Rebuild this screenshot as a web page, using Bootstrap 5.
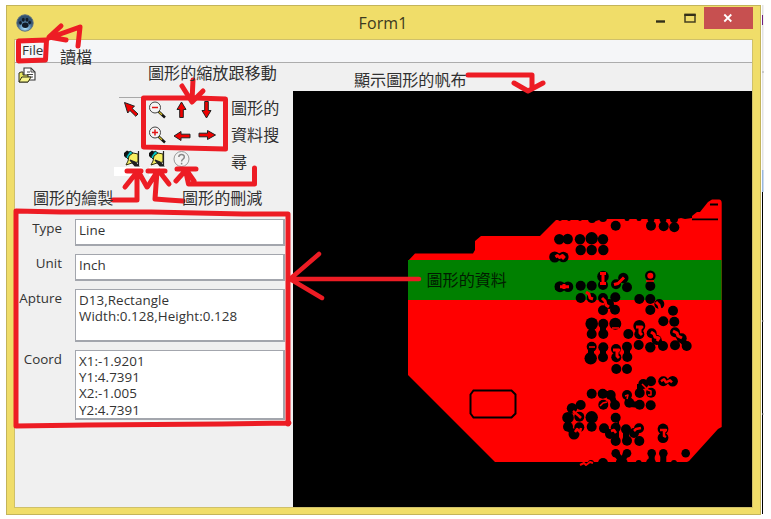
<!DOCTYPE html>
<html lang="zh-Hant">
<head>
<meta charset="utf-8">
<meta name="viewport" content="width=device-width, initial-scale=1">
<title>Form1</title>
<link href="https://cdn.jsdelivr.net/npm/bootstrap@5.3.0/dist/css/bootstrap.min.css" rel="stylesheet">
<style>
body{width:771px;height:519px;background:#fff;font-family:"Open Sans","Noto Sans CJK TC",sans-serif;font-size:13.4px;line-height:16.4px;color:#333}
.stage{width:771px;height:519px;padding:5px 0 0 6px}
.win{width:755px;height:510px;background:#f0dd69;border:1px solid #c3b45a;padding:0 7px 7px}
.titlebar{height:33px}
.app-icon{margin:8px 0 0 2px}
.caption-text{font-size:16px;line-height:35px;color:#3c3920;letter-spacing:.1px;padding-left:84px}
.win-controls{height:23px;padding-top:1px}
.close-btn{width:49px;height:22px;background:#c75050}
.client{border:1px solid #cfc06a;background:#f0f0f0}
.menu-strip{height:23px;background:#f5f6f8;border-bottom:1px solid #acacac}
.menu-item-text{font-size:13.5px;line-height:20px;padding-left:7px}
.side{width:278px}
.toolbar-row{height:34px;padding:4px 0 0 3px}
.viewer{height:416px;margin-top:28px;background:#000}
.tools{display:grid;grid-template-columns:repeat(4,25px);grid-auto-rows:24.5px;margin-left:104px;border-top:1px solid #a8a8a8;width:100px;place-items:center}
.prop-form{margin-top:47px;padding:0 8px 0 5px;display:grid;grid-template-columns:42px 210px;column-gap:13px}
.prop-form label{text-align:right;font-size:13.4px;white-space:nowrap;justify-self:end;padding-top:1px}
.field{background:#fff;border:1px solid #a3a6ad;border-bottom-width:2px;border-right-width:2px;padding:2px 3px;white-space:pre;width:210px;letter-spacing:.06px}
.field-line{height:27px}
.field-apture{height:53px}
.field-coord{height:70px}
.marks{left:0;top:0;width:771px;height:519px;pointer-events:none}
.note{font-family:"Noto Sans CJK TC",sans-serif;font-size:16.1px;fill:#303030}
.note-dark{fill:#001c00}
.edge{left:762px;top:5px}
</style>
<script src="https://cdn.jsdelivr.net/npm/bootstrap@5.3.0/dist/js/bootstrap.bundle.min.js"></script>
</head>
<body class="m-0 overflow-hidden">
<main class="stage position-relative">
<section class="win d-flex flex-column">
  <header class="titlebar d-flex justify-content-between align-items-start flex-shrink-0">
    <svg class="app-icon flex-shrink-0" width="18" height="18" viewBox="0 0 18 18">
      <defs><radialGradient id="ball" cx=".5" cy=".8"><stop offset="0" stop-color="#b4e4fb"/><stop offset=".55" stop-color="#6c9fc6"/><stop offset="1" stop-color="#31506f"/></radialGradient></defs>
      <circle cx="9" cy="9" r="8.2" fill="url(#ball)" stroke="#5d7182"/>
      <g fill="#111b27"><ellipse cx="9.3" cy="11.2" rx="3.3" ry="2.7"/><ellipse cx="4.5" cy="8.8" rx="1.4" ry="1.9"/><ellipse cx="7.3" cy="5.8" rx="1.4" ry="2"/><ellipse cx="11" cy="5.7" rx="1.4" ry="2"/><ellipse cx="13.6" cy="8.6" rx="1.4" ry="1.9"/></g>
    </svg>
    <span class="caption-text">Form1</span>
    <div class="win-controls d-flex align-items-start">
      <svg width="56" height="23" viewBox="0 0 56 23"><path d="M8 14.500h9" stroke="#333019" stroke-width="2.4"/><path d="M37 8h10v7H37z" fill="none" stroke="#454020" stroke-width="1.5"/><path d="M36.3 7.800h11.4" stroke="#333019" stroke-width="2.4"/></svg>
      <div class="close-btn d-flex align-items-center justify-content-center"><svg width="10" height="10" viewBox="0 0 10 10"><path d="M1.3 1.5l7 7M8.3 1.5l-7 7" stroke="#fff" stroke-width="1.8"/></svg></div>
    </div>
  </header>
  <div class="client flex-grow-1 d-flex flex-column">
    <nav class="menu-strip flex-shrink-0"><div class="menu-item-text">File</div></nav>
    <div class="d-flex flex-grow-1">
      <aside class="side flex-shrink-0">
        <div class="toolbar-row d-flex align-items-start">
          <svg width="19" height="18" viewBox="0 0 19 18"><path d="M6 1h7l4 4v8H6z" fill="#fff" stroke="#333" stroke-width="1.1"/><path d="M13 1v4h4M9 5h3M9 7.5h6M9 10h6" fill="none" stroke="#444"/><path d="M1 6l2-1h2v3h5v7H1z" fill="#e8e660" stroke="#33321a"/><path d="M1 15l2.8-5H13l-3 5z" fill="#f8f68c" stroke="#33321a"/></svg>
        </div>
        <div class="tools">
          <svg width="20" height="20" viewBox="0 0 20 20"><path d="M2.500 2.500l10 3.700-2.500 2.200 6 5.600-2.200 2.300-5.900-5.800L5.700 13z" fill="#f00000" stroke="#222"/></svg>
          <svg width="20" height="20" viewBox="0 0 20 20"><path d="M11 11l7 6.500" stroke="#111" stroke-width="2.4"/><path d="M12 12l3 2.700" stroke="#d3bd28" stroke-width="1.300"/><circle cx="8" cy="7.500" r="5.500" fill="#f4f4f4" stroke="#444"/><path d="M5 7.500h6" stroke="#e01515" stroke-width="1.500"/></svg>
          <svg width="20" height="20" viewBox="0 0 20 20"><path d="M9.500 2l4.500 7.500h-2.700v8H7.700v-8H5z" fill="#f00000" stroke="#222"/></svg>
          <svg width="20" height="20" viewBox="0 0 20 20"><path d="M9.500 18l4.500-7.500h-2.700v-9H7.700v9H5z" fill="#f00000" stroke="#222"/></svg>
          <span></span>
          <svg width="20" height="20" viewBox="0 0 20 20"><path d="M11 11l7 6.500" stroke="#111" stroke-width="2.4"/><path d="M12 12l3 2.700" stroke="#d3bd28" stroke-width="1.300"/><circle cx="8" cy="7.500" r="5.500" fill="#f4f4f4" stroke="#444"/><path d="M5 7.500h6M8 4.500v6" stroke="#e01515" stroke-width="1.500"/></svg>
          <svg width="20" height="20" viewBox="0 0 20 20"><path d="M2 11l7-4.500v2.700h9v3.600H9v2.700z" fill="#f00000" stroke="#222"/></svg>
          <svg width="20" height="20" viewBox="0 0 20 20"><path d="M18.500 10l-8-4.500v2.700H2v3.600h8.500v2.700z" fill="#f00000" stroke="#222"/></svg>
          <svg width="20" height="20" viewBox="0 0 20 20"><use href="#brush"/></svg>
          <svg width="20" height="20" viewBox="0 0 20 20"><g id="brush"><path d="M2 4l3-2.500L8 3 4 9 2 7z" fill="#111"/><path d="M4 8l4-6 3 2-4 7z" fill="#00c8c8" stroke="#133"/><path d="M7 7l4-3 5 1v8l-6 1-6 2 2-4z" fill="#f7ef62" stroke="#33300f"/><path d="M16.500 2v15M8 11l5 2 3.500 4H13z" fill="#222" stroke="#222" stroke-width="1.200"/></g></svg>
          <svg width="20" height="20" viewBox="0 0 20 20"><circle cx="9.500" cy="10" r="7.500" fill="#f3f3f3" stroke="#999"/><path d="M6.800 8c.2-3.400 5.600-3.300 5.500 0 0 2.300-2.700 2.200-2.700 4.500M9.600 13.800v1.600" fill="none" stroke="#888" stroke-width="1.500"/></svg>
        </div>
        <div class="prop-form">
          <label>Type</label><div class="field field-line mb-2">Line</div>
          <label>Unit</label><div class="field field-line mb-2">Inch</div>
          <label>Apture</label><div class="field field-apture mb-2">D13,Rectangle
Width:0.128,Height:0.128</div>
          <label>Coord</label><div class="field field-coord">X1:-1.9201
Y1:4.7391
X2:-1.005
Y2:4.7391</div>
        </div>
      </aside>
      <svg class="viewer flex-grow-1 d-block" viewBox="293 91 459 416" preserveAspectRatio="xMinYMin meet">
        <path d="M408 261L415 253.500H473L475 250V241L481 236H540L556 220H592L596 221L602 219H677L681 218L685 219L692 218V216L697 212H700L708 202L712 199.500H719Q721.700 199.500 721.700 203V427L718 429L689 461L687 462H495L408 375z" fill="#f00"/>
        <path d="M408 260h313.600v40H408z" fill="#008000"/>
        <path d="M692 219.300h26M710 204.500h8" stroke="#000" stroke-width="1.800"/>
        <path d="M473.500 390.500h38l4 4v19l-4 4h-38l-3-4v-19z" fill="none" stroke="#000" stroke-width="2"/>
        <g id="pads"></g>
        <g fill="none" stroke="#000" stroke-width="6"><path d="M555 286.700h12M591.700 324v10M603 324v10M591 347v11M603 347v11M627 347v10M651 333l12 13M675 332l12 14M568 417v10l6 7 6-7M640 384v9M627 395l3 9 10 1M604 428l6 6 6-6v13M626 429v12M615.700 453l6 8 5-8M651.700 453v9M663.300 453v9M603 394h8l4 11"/></g>
        <g fill="none" stroke="#f00" stroke-width="3" stroke-linejoin="round">
          <path d="M555.500 257l2-1.500 2 2 3-2 1.500 1.500-2 2M560 286.700h9M564 284v5M586 292l3 2 1 4 3 1M600 273.500h6M603 274v9M600 283.500h6M602 298l3 3 1 4 3 2M614 284.500l4-1 6-6"/>
          <path d="M656 302l3 3 1 4 4 2M636 327h6l-2 2v4l2 2M651 332l3 2 1 3 4 1-2 3M673 331l4 2 1 3 4 2M613 350h6l-2 2v4l2 2"/>
          <path d="M661 381.300l3-2 2 3 4-2 2 2M573 411l6 5 2 2M575 432l2-3 3 3 1-4M611 431l3-1 2 3M634 431l2-2 5-1M660 430h6l-2 2v4l2 1" stroke-width="2.500"/>
          <path d="M642 384l6 6 3 1v4h-3M600 406l3-3 4-1M625 396l3-1-1 4M589 347h6M612 328h7M646 281h8" stroke-width="1.500"/>
          <path d="M580 465l4-2 2 2 4-3 3 1" stroke-width="2"/>
        </g>
        <circle cx="650.300" cy="275.700" r="3" fill="#f00"/>
      </svg>
    </div>
  </div>
</section>
<svg class="edge position-absolute" width="3" height="514" viewBox="0 0 3 514"><path d="M0 0h1.500v165H0z" fill="#e3e3e3"/><path d="M0 165h1.500v22H0z" fill="#9ab8dd"/><path d="M0 187h1v322H0z" fill="#000"/><path d="M0 10h1v10H0z" fill="#702080"/><path d="M0 316h2M0 409h2M0 67h2" stroke="#aaa"/></svg>
<svg class="marks position-absolute" viewBox="0 0 771 519">
  <path d="M114 167h28v9h-28zM149 167h17v9h-17z" fill="#fff"/>
  <g fill="none" stroke="#ed1c24" stroke-width="5" stroke-linecap="round" stroke-linejoin="round">
    <path d="M18.500 41l28-1-1 20-27 1zM78 46l2-19-31 11M61 26L49 37l17 3"/>
    <path d="M143.500 98h52l30 1v50l-82-2z"/><path d="M193 80l-1 21M182 86l10 16 11-11"/>
    <path d="M113 200h24v-26M127 171h14M137 172l-12 15M138 171l9 16"/>
    <path d="M183 201l-15-1-13-1 2-28M148 171h17M157 172l-9 14M159 171l10 13" />
    <path d="M254.500 168v16h-66l-3-14M177 169h19M185 171l-9 10M187 171l7 10"/>
    <path d="M16 211l45 1h90l92 2h45v210M16 211v215M16 426l71-1 135-1 67-1"/>
    <path d="M468 75h64v13M514 83l14 8 15-8"/>
    <path d="M419 279H293M319 254l-29 25 32 19" stroke-width="4.500"/>
  </g>
  <g class="note">
    <text x="60" y="63">讀檔</text><text x="148" y="79">圖形的縮放跟移動</text><text x="354" y="86">顯示圖形的帆布</text>
    <text x="231" y="114">圖形的</text><text x="231" y="141">資料搜</text><text x="231" y="168">尋</text>
    <text x="33" y="204">圖形的繪製</text><text x="182" y="204">圖形的刪減</text><text class="note-dark" x="426.500" y="286">圖形的資料</text>
  </g>
</svg>
</main>
<script>
// Drill pads: x, y, optional radius
const pads = [[615.7,225.7],[651,225.7],[663.7,226.3],[674.3,227.3],[559.3,239.3,5.2],[567.7,239,5.2],[580,239.3,5.2],[591.7,238.3,6.2],[603,239.3,5.2],[580.7,250,5.2],[591.7,250,5.2],[603.3,250,5.2],
[554.7,257,5.5],[563.3,257,5.3],[560,286.7,5.5],[568,286.7,5.3],[580.7,285.7],[591.7,285.7],[580.7,298],[591.7,298],[603,276.5,5.8],[603,285],[616,284.3],[623.3,278,5.2],[627,287.3],[650.3,275.7,5.3],[650.3,286],
[603,298],[615.3,297.3],[639.3,299],[650.3,299],[609,304],[603,310.3],[615,309.7],[650.3,310],[659.3,304],[673,310.7],[663.3,321.3],[674.3,321.7],
[591.7,323.7,6.3],[603.3,323.7],[615.3,323.7,6],[591.7,334],[603.3,334],[628.3,334],[639.3,326,6],[639.3,334.3],[638.7,345],[651.7,333.3],[656.7,340],[650.3,347.3,5.2],[663,346],[675,332.3],[681.7,338.3],[675,345.3],[686.7,346,5],
[591.7,346.7],[603.3,347.3],[590.7,358.3,6.2],[603,357.3],[616,349],[616.3,357.3],[627,346.7],[627.3,357],[616.3,369],[627,369],[663.3,381.3,5],[672.7,381.3,5.2],
[643.3,384],[651,381.3],[639.7,393],[651,392.7],[591.7,393.7],[602.7,393.7],[610.7,395],[603.3,404.7],[615,405],[627,395],[629.3,402.7],[639.7,404.7],[650.7,405.3],
[580.7,405],[572,408.3,5.2],[568,417.7,5.8],[568,426.7,5],[574,434,5.5],[579.3,427.3],[579.3,416.7],[591.7,417.3,6.2],[591.7,426.7],[615.7,417.7],[604,428.3],[610,434],[615.7,427.7],[615.7,441],[626,429.3],[627,440.7],[639,428.3],[634,433],[639.3,441],[663,429,5.4],[663,437.7,5.4],
[615.7,453.3,4.3],[627,453.3,4.3],[651.7,453.3,4.3],[663.3,453.3,4.3],[685.7,453.3,4.3],[603,463],[621.7,463,6],[651,463,5],[638.7,463,3],[663,463,3],[674,463,3],[591,463,3],
[592,219,4],[603,218,4],[560,219,2],[569,219,2],[580,219,2],[627,218.5,2.5],[639,218.5,2.5],[651,219,3.5],[663,219,3.5],[674,219,4]];
document.getElementById("pads").innerHTML = pads.map(([x,y,r=5]) => `<circle cx="${x}" cy="${y}" r="${r}"/>`).join("");
</script>
</body>
</html>
